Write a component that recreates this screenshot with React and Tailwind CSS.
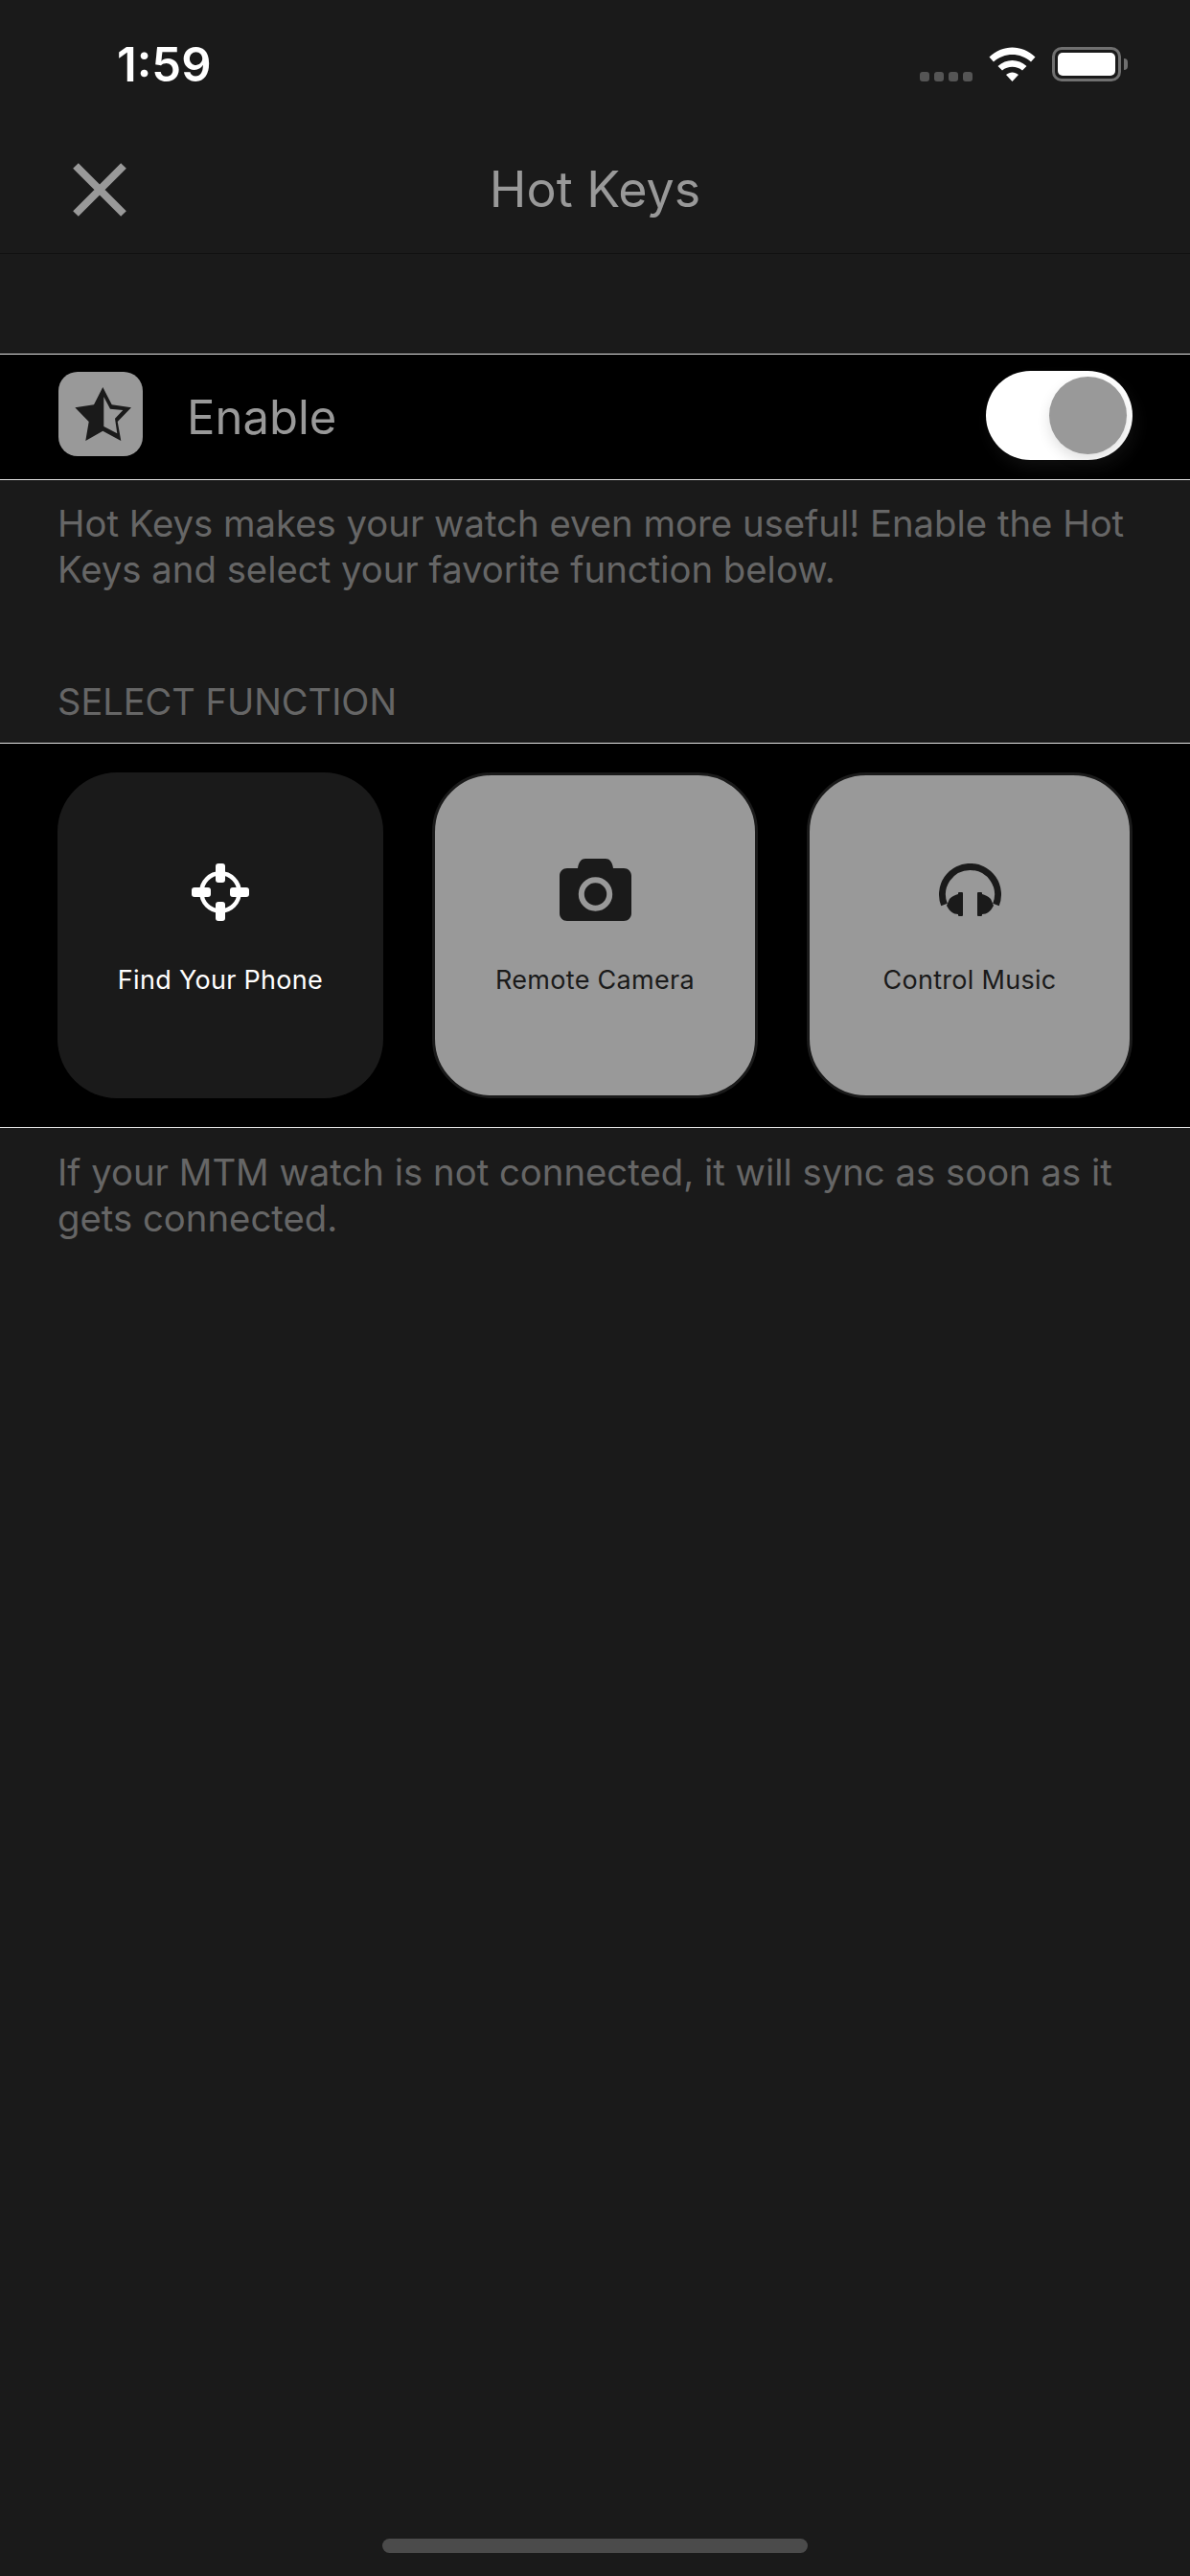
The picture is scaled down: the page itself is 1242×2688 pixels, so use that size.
const font = { fontFamily: "Inter, 'Noto Sans', sans-serif" };

const StarIcon = () => (
  <svg width="60" height="56" viewBox="0 0 60 56" fill="none">
    <path
      d="M29.300 0 L38.700 18.300 L59 21.300 L44.700 36 L48.300 56 L29.300 45.700 L11.300 56 L14.700 36 L0.300 21.300 L20 18.300 Z"
      fill="#1a1a1a"
    />
    <path d="M30.300 10 L37 22.700 L50.300 24 L42 32.700 L44.300 48.300 L30.300 41 Z" fill="#999999" />
  </svg>
);

const TargetIcon = () => (
  <svg width="60" height="60" viewBox="0 0 60 60" fill="none">
    <circle cx="30" cy="30" r="19.700" stroke="white" strokeWidth="4.500" />
    <rect x="25" y="0" width="10" height="20" rx="3" fill="white" />
    <rect x="25" y="40" width="10" height="20" rx="3" fill="white" />
    <rect x="0" y="25" width="20" height="10" rx="3" fill="white" />
    <rect x="40" y="25" width="20" height="10" rx="3" fill="white" />
  </svg>
);

const CameraIcon = () => (
  <svg width="75" height="65" viewBox="0 0 75 65" fill="none">
    <path
      d="M8 10 H19 C20 3 23 0 27 0 H48 C52 0 55 3 56 10 H67 C71.500 10 75 13.500 75 18 V57 C75 61.500 71.500 65 67 65 H8 C3.500 65 0 61.500 0 57 V18 C0 13.500 3.500 10 8 10 Z"
      fill="#1a1a1a"
    />
    <circle cx="37.500" cy="37" r="14.700" stroke="#999999" strokeWidth="6" />
  </svg>
);

const HeadphonesIcon = () => (
  <svg width="65" height="55" viewBox="0 0 65 55" fill="none">
    <path d="M5.500 43 A29 29 0 1 1 59.500 43" stroke="#1a1a1a" strokeWidth="7" fill="none" />
    <path
      d="M2.500 44 L8 44 L11 37 C14 34 17 33 20 32 V31 Q20 30 21 30 H24 Q25 30 25 31 V54 Q25 55 24 55 H21 Q20 55 20 54 V53 C15 53 11 50 8 44 Z"
      fill="#1a1a1a"
    />
    <path
      d="M62.500 44 L57 44 L54 37 C51 34 48 33 45 32 V31 Q45 30 44 30 H41 Q40 30 40 31 V54 Q40 55 41 55 H44 Q45 55 45 54 V53 C50 53 54 50 57 44 Z"
      fill="#1a1a1a"
    />
  </svg>
);

const CloseIcon = () => (
  <svg width="58" height="58" viewBox="0 0 58 58" fill="none">
    <path d="M4 4 L54 54 M54 4 L4 54" stroke="#999999" strokeWidth="8" />
  </svg>
);

const WifiIcon = () => (
  <svg width="49" height="36" viewBox="0 0 49 36" fill="white">
    <path d="M0.500 10.500 C14 -3 35 -3 48.500 10.500 L44 15.500 C33 5.500 16 5.500 5 15.500 Z" />
    <path d="M9.500 20 C18 12 31 12 39.500 20 L35 24.500 C29 19.500 20 19.500 14 24.500 Z" />
    <path d="M18 29 C22 25.500 27 25.500 31 29 L24.500 36 Z" />
  </svg>
);

const FunctionCard = ({ icon, label, active, iconBox }) => (
  <div
    className={`w-[340px] h-[340px] rounded-[62px] flex flex-col items-center ${
      active
        ? "bg-[#1a1a1a] text-white"
        : "bg-[#999999] border-[3px] border-[#1a1a1a] text-[#1a1a1a]"
    }`}
  >
    <div className={`flex items-end justify-center w-full ${iconBox}`}>{icon}</div>
    <span className="text-[27px] leading-[34px] tracking-[0.3px] mt-[45px]">
      {label}
    </span>
  </div>
);

export default function App() {
  return (
    <div
      className="w-[1242px] h-[2688px] bg-[#1a1a1a] flex flex-col overflow-hidden"
      style={font}
    >
      {/* Status bar */}
      <div className="h-[132px] flex items-start justify-between pl-[122px] pr-[65px]">
        <span className="text-white text-[49px] leading-[56px] font-semibold mt-[40px]">
          1:59
        </span>
        <div className="flex items-start mt-[49px]">
          <div className="flex gap-[5px] mt-[26px] mr-[17px]">
            <div className="w-[10px] h-[10px] rounded-[3px] bg-[#555555]" />
            <div className="w-[10px] h-[10px] rounded-[3px] bg-[#555555]" />
            <div className="w-[10px] h-[10px] rounded-[3px] bg-[#555555]" />
            <div className="w-[10px] h-[10px] rounded-[3px] bg-[#555555]" />
          </div>
          <WifiIcon />
          <div className="flex items-center ml-[17px]">
            <div className="w-[72px] h-[36px] rounded-[10px] border-[3px] border-[#707070] p-[3px]">
              <div className="w-full h-full rounded-[5px] bg-white" />
            </div>
            <div className="w-[4px] h-[12px] ml-[3px] rounded-r-[4px] bg-[#707070]" />
          </div>
        </div>
      </div>

      {/* Nav */}
      <div className="h-[133px] relative flex items-center justify-center border-b border-[#111111]">
        <div className="absolute left-[75px] top-[37px]">
          <CloseIcon />
        </div>
        <span className="text-[#999999] text-[52px] leading-[60px]">
          Hot Keys
        </span>
      </div>

      {/* Enable row */}
      <div className="mt-[104px] h-[132px] bg-black border-y border-[#e4e4e4] flex items-center pl-[61px] pr-[60px]">
        <div className="w-[88px] h-[88px] mb-[7px] rounded-[20px] bg-[#999999] flex items-center justify-center pl-[5px]">
          <StarIcon />
        </div>
        <span className="text-[#999999] text-[49px] leading-[60px] ml-[46px] mt-[2px]">
          Enable
        </span>
        <div className="ml-auto w-[153px] h-[93px] mb-[3px] rounded-full bg-white flex items-center justify-end pr-[6px] shadow-[4px_8px_16px_rgba(255,255,255,0.06)]">
          <div className="w-[81px] h-[81px] rounded-full bg-[#999999] shadow-[0_6px_14px_rgba(0,0,0,0.12)]" />
        </div>
      </div>

      <p className="text-[#666666] text-[38.300px] leading-[48px] px-[60px] pt-[21px]">
        Hot Keys makes your watch even more useful! Enable the Hot Keys and
        select your favorite function below.
      </p>

      <div className="text-[#666666] text-[38px] leading-[44px] pl-[60px] mt-[92px] h-[65px]">
        SELECT FUNCTION
      </div>

      {/* Function cards */}
      <div className="h-[402px] bg-black border-y border-[#e4e4e4] flex items-center justify-between pl-[60px] pr-[60px]">
        <FunctionCard
          active
          icon={<TargetIcon />}
          label="Find Your Phone"
          iconBox="h-[155px]"
        />
        <FunctionCard
          icon={<CameraIcon />}
          label="Remote Camera"
          iconBox="h-[152px]"
        />
        <FunctionCard
          icon={<HeadphonesIcon />}
          label="Control Music"
          iconBox="h-[152px] pb-[5px]"
        />
      </div>

      <p className="text-[#666666] text-[38.300px] leading-[48px] px-[60px] pt-[22px]">
        If your MTM watch is not connected, it will sync as soon as it gets
        connected.
      </p>

      {/* Home indicator */}
      <div className="mt-auto mb-[24px] self-center w-[444px] h-[15px] rounded-[8px] bg-[#4b4b4b]" />
    </div>
  );
}
